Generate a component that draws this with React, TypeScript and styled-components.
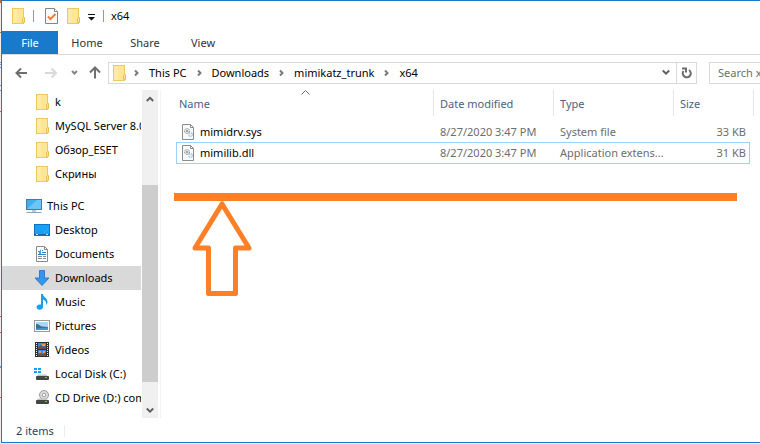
import React from "react";
import styled, { createGlobalStyle, css } from "styled-components";

const GlobalStyle = createGlobalStyle`
  *, *::before, *::after { box-sizing: border-box; }
  body {
    margin: 0;
    background: #fff;
    overflow: hidden;
    font-family: "Noto Sans", "Open Sans", sans-serif;
    font-size: 11px;
    line-height: 16px;
    color: #000;
  }
  button, input { font: inherit; }
`;

const plainButton = css`
  display: inline-flex;
  align-items: center;
  justify-content: center;
  padding: 0;
  border: 0;
  background: transparent;
  color: inherit;
`;

const Desktop = styled.div`
  display: flex;
  min-height: 100vh;
  padding-bottom: 1px;
  background: #f3ecef;
`;

const DesktopEdge = styled.svg`
  flex: none;
  width: 1px;
`;

const Window = styled.main`
  flex: 1;
  min-width: 0;
  display: flex;
  flex-direction: column;
  border: solid #1979ca;
  border-width: 1px 0 1px 1px;
  background: #fff;
`;

const TitleBar = styled.header`
  display: flex;
  align-items: center;
  height: 30px;
  padding-left: 8px;
`;

const QuickButton = styled.button<{ $width?: number }>`
  ${plainButton}
  width: ${(p) => p.$width ?? 16}px;
  height: 24px;
`;

const QuickDivider = styled.span<{ $before: number; $after: number }>`
  width: 1px;
  height: 12px;
  margin: 0 ${(p) => p.$after}px 0 ${(p) => p.$before}px;
  background: #999;
`;

const Title = styled.h1`
  margin: 0;
  font-size: 11px;
  font-weight: 400;
`;

const Ribbon = styled.nav`
  display: flex;
  height: 24px;
  border-bottom: 1px solid #dadbdc;
`;

const RibbonTab = styled.button<{ $file?: boolean }>`
  ${plainButton}
  width: ${(p) => (p.$file ? 56 : 58)}px;
  height: 23px;
  color: ${(p) => (p.$file ? "#fff" : "#333")};
  background: ${(p) => (p.$file ? "#1979ca" : "transparent")};
`;

const AddressRow = styled.div`
  display: flex;
  align-items: center;
  height: 35px;
`;

const History = styled.div`
  display: flex;
  align-items: center;
  width: 106px;
  padding-left: 13px;
`;

const HistoryButton = styled.button<{ $width: number }>`
  ${plainButton}
  justify-content: flex-start;
  width: ${(p) => p.$width}px;
  height: 22px;
`;

const AddressBox = styled.div`
  flex: 1;
  min-width: 0;
  display: flex;
  align-items: center;
  height: 22px;
  margin-right: 12px;
  padding-left: 2px;
  border: 1px solid #d9d9d9;
`;

const Crumbs = styled.ol`
  flex: 1;
  display: flex;
  align-items: center;
  margin: 0;
  padding: 0;
  list-style: none;
`;

const CrumbChevron = styled.svg`
  width: 5px;
  height: 8px;
  margin: 0 10px;
`;

const Crumb = styled.li`
  display: flex;
  align-items: center;
  white-space: nowrap;
  &:first-child ${CrumbChevron} { margin-left: 7px; }
`;

const CrumbLink = styled.a`
  color: #000;
  text-decoration: none;
`;

const BoxButton = styled.button<{ $divided?: boolean }>`
  ${plainButton}
  width: 20px;
  height: 20px;
  border-left: ${(p) => (p.$divided ? "1px solid #d9d9d9" : "0")};
`;

const Search = styled.input`
  flex: none;
  width: 51px;
  height: 22px;
  padding: 0 0 0 8px;
  border: 1px solid #d9d9d9;
  border-right: 0;
  border-radius: 0;
  outline: 0;
  background: #fff;
  &::placeholder { color: #6d6d6d; opacity: 1; }
`;

const Body = styled.div`
  flex: 1;
  display: flex;
  min-height: 328px;
`;

const Sidebar = styled.aside`
  flex: none;
  display: flex;
  width: 159px;
  border-right: 1px solid #f3f3f3;
`;

const Tree = styled.ul`
  flex: none;
  width: 139px;
  margin: 0 1px 0 0;
  padding: 0;
  list-style: none;
  overflow: hidden;
`;

const TreeItem = styled.li<{ $root?: boolean; $selected?: boolean }>`
  height: 24px;
  margin-top: ${(p) => (p.$root ? 8 : 0)}px;
  padding-left: ${(p) => (p.$root ? 24 : 32)}px;
  background: ${(p) => (p.$selected ? "#d9d9d9" : "transparent")};
`;

const TreeLink = styled.a`
  display: flex;
  align-items: center;
  gap: 5px;
  height: 24px;
  color: #000;
  text-decoration: none;
  white-space: nowrap;
  svg { flex: none; }
`;

const ScrollBar = styled.div`
  display: flex;
  flex-direction: column;
  width: 16px;
  background: #f0f0f0;
`;

const ScrollButton = styled.button`
  ${plainButton}
  height: 17px;
  padding-top: 2px;
`;

const ScrollTrack = styled.div`
  flex: 1;
  padding-top: 78px;
`;

const ScrollThumb = styled.div`
  height: 197px;
  background: #cdcdcd;
`;

const Files = styled.section`
  flex: 1;
  min-width: 0;
`;

const FileTable = styled.table`
  width: calc(100% - 21px);
  margin-left: 15px;
  border-collapse: separate;
  border-spacing: 0;
  table-layout: fixed;
`;

const Column = styled.col<{ $width?: number }>`
  width: ${(p) => (p.$width ? `${p.$width}px` : "auto")};
`;

const ColumnHead = styled.th`
  height: 26px;
  padding: 0;
  border-right: 1px solid #e5e5e5;
  font-weight: 400;
  color: #4c5f86;
`;

const SortButton = styled.button<{ $first?: boolean }>`
  ${plainButton}
  display: flex;
  flex-direction: column;
  align-items: stretch;
  justify-content: flex-start;
  width: 100%;
  height: 26px;
  padding-left: ${(p) => (p.$first ? 3 : 6)}px;
  line-height: 18px;
  text-align: left;
`;

const SortSpace = styled.span`
  display: flex;
  flex: none;
  height: 5px;
  justify-content: center;
`;

const Spacer = styled.tr`
  height: 5px;
`;

const Cell = styled.td<{ $selected?: boolean; $muted?: boolean; $right?: boolean }>`
  height: ${(p) => (p.$selected ? 22 : 21)}px;
  padding: 0 ${(p) => (p.$right ? 4 : 0)}px 0 6px;
  overflow: hidden;
  white-space: nowrap;
  text-align: ${(p) => (p.$right ? "right" : "left")};
  color: ${(p) => (p.$muted ? "#6d6d6d" : "#000")};
  ${(p) =>
    p.$selected &&
    css`
      border: solid #99d1ff;
      border-width: 1px 0;
      &:first-child {
        border-left-width: 1px;
        padding-left: 5px;
      }
      &:last-child {
        border-right-width: 1px;
        padding-right: 3px;
      }
    `}
`;

const FileName = styled.span`
  display: flex;
  align-items: center;
  gap: 4px;
`;

const Underline = styled.div`
  height: 8px;
  margin: 29px 23px 0 13px;
  background: #ff7f27;
`;

const Arrow = styled.svg`
  display: block;
  margin-left: 31px;
`;

const StatusBar = styled.footer`
  display: flex;
  align-items: center;
  height: 24px;
  padding: 2px 0 0 14px;
  color: #1f3f66;
`;

const StatusDivider = styled.span`
  width: 1px;
  height: 12px;
  margin-left: 10px;
  background: #ececec;
`;

const FolderIcon = () => (
  <svg width="16" height="16" viewBox="0 0 16 16" aria-hidden="true">
    <rect x="2.500" y="0.500" width="11" height="15" fill="#ffe596" stroke="#edc95f" />
    <path d="M3 1h4v14h-4z" fill="#ffeaa8" />
    <path d="M12.500 14.500v-4l1-1h1v5z" fill="#ffe596" stroke="#e9c04a" />
  </svg>
);

const CheckDocIcon = () => (
  <svg width="13" height="16" viewBox="0 0 13 16" aria-hidden="true">
    <path d="M0.500 0.500h9l3 3v12h-12z" fill="#f8f9fb" stroke="#858585" />
    <path d="M9.500 0.500v3h3" fill="#fff" stroke="#858585" />
    <path d="M3 8.500l2.500 2.500l5-5" fill="none" stroke="#f27b35" strokeWidth="2" />
  </svg>
);

const Chevron = ({ dir, color = "#606060" }: { dir: "up" | "down"; color?: string }) => (
  <svg width="8" height="7" viewBox="0 0 8 7" aria-hidden="true">
    <path
      d={dir === "up" ? "M0.800 5l3.200-3.200l3.200 3.200" : "M0.800 1.500l3.200 3.200l3.200-3.200"}
      fill="none"
      stroke={color}
      strokeWidth="2"
    />
  </svg>
);

const PcIcon = () => (
  <svg width="16" height="16" viewBox="0 0 16 16" aria-hidden="true">
    <rect x="0.500" y="1.500" width="15" height="10" fill="#42aef0" stroke="#397dac" />
    <path d="M1 11L11 2H15V11z" fill="#6cc5f9" />
    <path d="M6 12h4v2h-4z" fill="#b9cbd8" />
    <path d="M0.500 14.500h15" stroke="#8ba2b3" />
  </svg>
);

const DesktopIcon = () => (
  <svg width="16" height="16" viewBox="0 0 16 16" aria-hidden="true">
    <rect x="0.500" y="2.500" width="15" height="11" fill="#18a0f8" stroke="#0c73bd" />
    <path d="M1 12.500h14" stroke="#0a6cb5" />
    <path d="M2 12.500h2M12 12.500h2" stroke="#bfe4ff" />
    <path d="M10 11l4-4" stroke="#5abdfb" strokeDasharray="1 1" />
  </svg>
);

const DocumentIcon = () => (
  <svg width="16" height="16" viewBox="0 0 16 16" aria-hidden="true">
    <path d="M2.500 0.500h8l3 3v12h-11z" fill="#fff" stroke="#8a8a8a" />
    <path d="M10.500 0.500v3h3" fill="none" stroke="#8a8a8a" />
    <path d="M4 5.500h2M8 4.500h1M8 6.500h4M4 8.500h8" stroke="#2f87c9" />
    <path d="M4 10.500h4M9 10.500h3M4 12.500h4M9 12.500h3" stroke="#7d8d99" />
    <path d="M5 6l2-3v5h-2z" fill="#4da0dc" />
  </svg>
);

const DownloadIcon = () => (
  <svg width="16" height="16" viewBox="0 0 16 16" aria-hidden="true">
    <path d="M5.500 0.500h5v7.500h4.500l-7 7.500l-7-7.500h4.500z" fill="#3595e8" stroke="#2a7fcd" />
  </svg>
);

const MusicIcon = () => (
  <svg width="16" height="16" viewBox="0 0 16 16" aria-hidden="true">
    <path
      d="M7 0h2c0 3 5 4 4.500 8.500c-0.300 1.200-0.800 2-1.500 2.500c0.700-3-0.800-4.500-3-5.500v7.500a3.200 2.700 0 1 1-2-2.400z"
      fill="#1a9ff0"
    />
  </svg>
);

const PictureIcon = () => (
  <svg width="16" height="16" viewBox="0 0 16 16" aria-hidden="true">
    <rect x="0.500" y="2.500" width="15" height="11" fill="#fff" stroke="#9a9a9a" />
    <rect x="2" y="4" width="12" height="8" fill="#a9d8f6" />
    <path d="M2 6c3 0 4 2 6 2.500l6 0.500v3h-12z" fill="#3b6f92" />
    <path d="M2 10.500l12-1v2.500h-12z" fill="#3e97d3" />
  </svg>
);

const VideoIcon = () => (
  <svg width="16" height="16" viewBox="0 0 16 16" aria-hidden="true">
    <rect x="1" y="0" width="14" height="15" fill="#303030" />
    <path d="M2.500 1v14M13.500 1v14" stroke="#f2f2f2" strokeDasharray="1 1" />
    <rect x="4" y="1" width="8" height="6" fill="#3c8ce0" />
    <rect x="4" y="8" width="8" height="6" fill="#3c8ce0" />
    <path d="M4 5l3-2l2 2l3-1v3h-8zM4 12l2-1l3 1l3-2v4h-8z" fill="#705048" />
    <path d="M8 2h3v2h-3zM5 9h2v2h-2zM9 9h2v2h-2z" fill="#e2a24b" />
  </svg>
);

const DriveBase = () => (
  <>
    <path d="M4 8.500h8l3 2.500h-13z" fill="#c4c4c4" />
    <rect x="2" y="10" width="13" height="4" rx="1" fill="#454545" />
    <rect x="11" y="11" width="2" height="1" fill="#4fe04f" />
  </>
);

const DiskIcon = () => (
  <svg width="16" height="16" viewBox="0 0 16 16" aria-hidden="true">
    <path d="M0 2h3v2h-3zM4 2h3v2h-3zM0 5h3v2h-3zM4 5h3v2h-3z" fill="#12a4f4" />
    <DriveBase />
  </svg>
);

const CdIcon = () => (
  <svg width="16" height="16" viewBox="0 0 16 16" aria-hidden="true">
    <circle cx="10" cy="5" r="4.500" fill="#dedede" stroke="#9b9b9b" />
    <circle cx="10" cy="5" r="1.800" fill="#fff" stroke="#9b9b9b" />
    <DriveBase />
  </svg>
);

const SystemFileIcon = () => (
  <svg width="14" height="16" viewBox="0 0 14 16" aria-hidden="true">
    <path d="M0.500 0.500h8l3 3v12h-11z" fill="#fafafa" stroke="#8c8c8c" />
    <path d="M8.500 0.500v3h3" fill="none" stroke="#8c8c8c" />
    <circle cx="5" cy="7" r="2.500" fill="#e6e6e6" stroke="#8f979c" strokeDasharray="2 1" />
    <circle cx="5" cy="7" r="1" fill="#8b9195" />
    <circle cx="8.500" cy="10.500" r="2" fill="#dceef8" stroke="#8fbdd6" strokeDasharray="2 1" />
  </svg>
);

const tree = [
  { label: "k", icon: FolderIcon },
  { label: "MySQL Server 8.0", icon: FolderIcon },
  { label: "Обзор_ESET", icon: FolderIcon },
  { label: "Скрины", icon: FolderIcon },
  { label: "This PC", icon: PcIcon, root: true },
  { label: "Desktop", icon: DesktopIcon },
  { label: "Documents", icon: DocumentIcon },
  { label: "Downloads", icon: DownloadIcon, selected: true },
  { label: "Music", icon: MusicIcon },
  { label: "Pictures", icon: PictureIcon },
  { label: "Videos", icon: VideoIcon },
  { label: "Local Disk (C:)", icon: DiskIcon },
  { label: "CD Drive (D:) com", icon: CdIcon },
];

const crumbs = ["This PC", "Downloads", "mimikatz_trunk", "x64"];

const columns = ["Name", "Date modified", "Type", "Size"];

const files = [
  { name: "mimidrv.sys", date: "8/27/2020 3:47 PM", type: "System file", size: "33 KB" },
  { name: "mimilib.dll", date: "8/27/2020 3:47 PM", type: "Application extens...", size: "31 KB", selected: true },
];

export default function App() {
  return (
    <>
      <GlobalStyle />
      <Desktop>
        <DesktopEdge viewBox="0 0 1 443" preserveAspectRatio="none" aria-hidden="true">
          <path d="M0 0h1v3h-1zM0 32h1v1h-1zM0 111h1v1h-1zM0 316h1v1h-1zM0 332h1v1h-1zM0 397h1v1h-1z" fill="#c56a2c" />
          <path d="M0 62h1v1h-1zM0 64h1v1h-1zM0 67h1v1h-1zM0 85h1v1h-1zM0 90h1v1h-1zM0 366h1v2h-1z" fill="#59a3e0" />
        </DesktopEdge>
        <Window>
          <TitleBar>
            <QuickButton aria-label="Folder"><FolderIcon /></QuickButton>
            <QuickDivider $before={7} $after={11} />
            <QuickButton $width={13} aria-label="Properties"><CheckDocIcon /></QuickButton>
            <QuickButton $width={29} aria-label="New folder"><FolderIcon /></QuickButton>
            <QuickButton $width={8} aria-label="Customize Quick Access Toolbar">
              <svg width="7" height="10" viewBox="0 0 7 10" aria-hidden="true">
                <path d="M0 3h7v1h-7zM0 6h7l-3.500 3.500z" fill="#111" />
              </svg>
            </QuickButton>
            <QuickDivider $before={8} $after={7} />
            <Title>x64</Title>
          </TitleBar>
          <Ribbon>
            <RibbonTab $file>File</RibbonTab>
            <RibbonTab>Home</RibbonTab>
            <RibbonTab>Share</RibbonTab>
            <RibbonTab>View</RibbonTab>
          </Ribbon>
          <AddressRow>
            <History>
              <HistoryButton $width={30} aria-label="Back">
                <svg width="13" height="12" viewBox="0 0 13 12" aria-hidden="true">
                  <path d="M12 6h-10.500M6 1.500l-4.500 4.500l4.500 4.500" fill="none" stroke="#6e6e6e" strokeWidth="2" />
                </svg>
              </HistoryButton>
              <HistoryButton $width={26} aria-label="Forward">
                <svg width="13" height="12" viewBox="0 0 13 12" aria-hidden="true">
                  <path d="M0 6h11M6.500 1.500l4.500 4.500l-4.500 4.500" fill="none" stroke="#d8d8d8" strokeWidth="2" />
                </svg>
              </HistoryButton>
              <HistoryButton $width={18} aria-label="Recent locations">
                <svg width="7" height="5" viewBox="0 0 7 5" aria-hidden="true">
                  <path d="M1 1l2.500 2.500l2.500-2.500" fill="none" stroke="#858585" strokeWidth="2" />
                </svg>
              </HistoryButton>
              <HistoryButton $width={12} aria-label="Up">
                <svg width="12" height="13" viewBox="0 0 12 13" aria-hidden="true">
                  <path d="M6 12.500v-11M1 6.500l5-5l5 5" fill="none" stroke="#707070" strokeWidth="2" />
                </svg>
              </HistoryButton>
            </History>
            <AddressBox>
              <FolderIcon />
              <Crumbs>
                {crumbs.map((name) => (
                  <Crumb key={name}>
                    <CrumbChevron viewBox="0 0 5 8" aria-hidden="true">
                      <path d="M1 1.500l2.500 2.500l-2.500 2.500" fill="none" stroke="#7a7a7a" strokeWidth="2" />
                    </CrumbChevron>
                    <CrumbLink href="#">{name}</CrumbLink>
                  </Crumb>
                ))}
              </Crumbs>
              <BoxButton aria-label="Previous locations"><Chevron dir="down" /></BoxButton>
              <BoxButton $divided aria-label="Refresh">
                <svg width="11" height="12" viewBox="0 0 11 12" aria-hidden="true">
                  <path d="M2.500 4a4 4 0 1 0 5.500-1" fill="none" stroke="#6e6e6e" strokeWidth="2" />
                  <path d="M1 1.500h4v4" fill="none" stroke="#6e6e6e" strokeWidth="2" />
                </svg>
              </BoxButton>
            </AddressBox>
            <Search type="text" aria-label="Search x64" placeholder="Search x64" />
          </AddressRow>
          <Body>
            <Sidebar>
              <Tree>
                {tree.map(({ label, icon: Icon, root, selected }) => (
                  <TreeItem key={label} $root={root} $selected={selected}>
                    <TreeLink href="#"><Icon />{label}</TreeLink>
                  </TreeItem>
                ))}
              </Tree>
              <ScrollBar>
                <ScrollButton aria-label="Scroll up"><Chevron dir="up" /></ScrollButton>
                <ScrollTrack><ScrollThumb /></ScrollTrack>
                <ScrollButton aria-label="Scroll down"><Chevron dir="down" /></ScrollButton>
              </ScrollBar>
            </Sidebar>
            <Files>
              <FileTable>
                <colgroup>
                  <Column />
                  <Column $width={120} />
                  <Column $width={120} />
                  <Column $width={76} />
                  <Column $width={4} />
                </colgroup>
                <thead>
                  <tr>
                    {columns.map((label, i) => (
                      <ColumnHead key={label} scope="col" colSpan={label === "Size" ? 2 : 1}>
                        <SortButton $first={i === 0}>
                          <SortSpace>
                            {i === 0 && (
                              <svg width="9" height="5" viewBox="0 0 9 5" aria-hidden="true">
                                <path d="M0.500 4.500l4-4l4 4" fill="none" stroke="#6a6a6a" />
                              </svg>
                            )}
                          </SortSpace>
                          {label}
                        </SortButton>
                      </ColumnHead>
                    ))}
                  </tr>
                </thead>
                <tbody>
                  <Spacer aria-hidden="true" />
                  {files.map((f) => (
                    <tr key={f.name}>
                      <Cell $selected={f.selected}>
                        <FileName><SystemFileIcon />{f.name}</FileName>
                      </Cell>
                      <Cell $selected={f.selected} $muted>{f.date}</Cell>
                      <Cell $selected={f.selected} $muted>{f.type}</Cell>
                      <Cell $selected={f.selected} $muted $right>{f.size}</Cell>
                    </tr>
                  ))}
                </tbody>
              </FileTable>
              <Underline />
              <Arrow width="60" height="96" viewBox="0 0 60 96" aria-hidden="true">
                <path
                  d="M30 3L57 47H43.500V92.500H16.500V47H3z"
                  fill="none"
                  stroke="#ff7f27"
                  strokeWidth="5"
                  strokeLinejoin="round"
                />
              </Arrow>
            </Files>
          </Body>
          <StatusBar>
            2 items
            <StatusDivider />
          </StatusBar>
        </Window>
      </Desktop>
    </>
  );
}
